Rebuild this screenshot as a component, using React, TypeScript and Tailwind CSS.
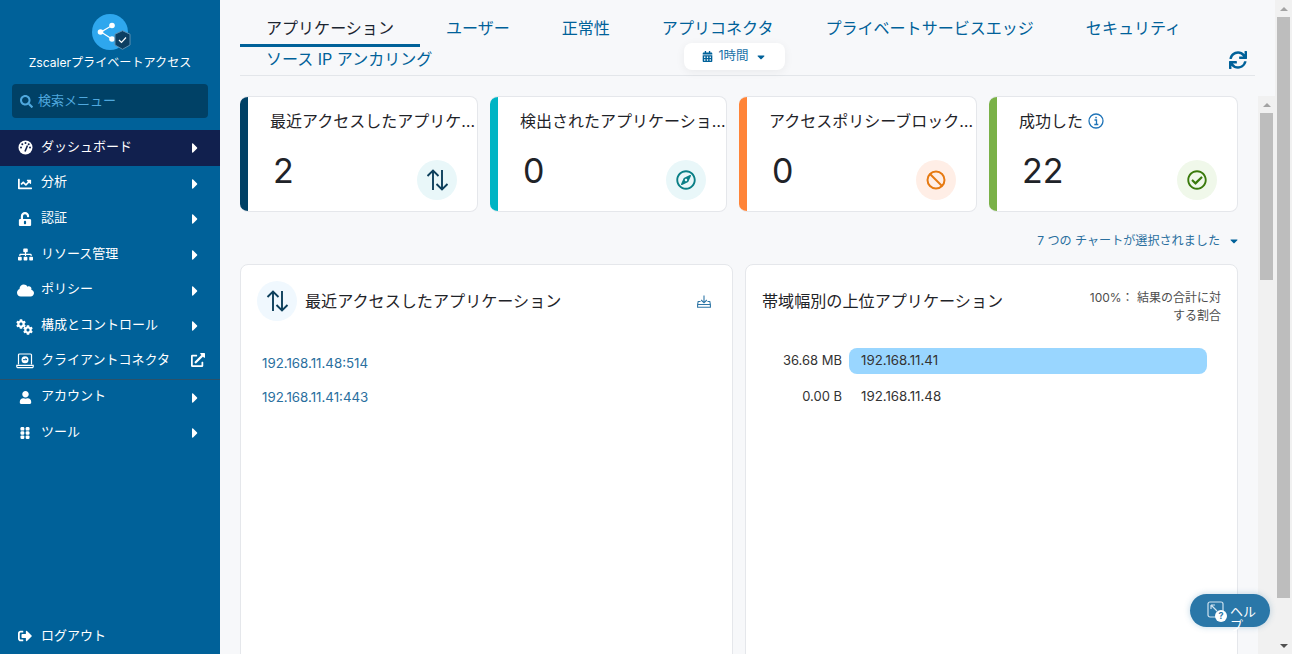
import React from "react";
import {
  FaChartLine, FaUnlockAlt, FaSitemap, FaCloud, FaCog, FaExternalLinkAlt, FaUser,
  FaSignOutAlt, FaCaretRight, FaCaretDown, FaSearch, FaCalendarAlt, FaSync, FaRegCompass, FaRegCheckCircle,
} from "react-icons/fa";

const font = "font-['Inter','Noto_Sans_CJK_JP',sans-serif]";

function Gauge() {
  return (
    <svg width="15" height="15" viewBox="0 0 15 15">
      <circle cx="7.500" cy="7.500" r="7" fill="#fff" />
      <g fill="#11204e">
        <circle cx="3" cy="7.500" r="1" />
        <circle cx="4.300" cy="4.300" r="1" />
        <circle cx="7.500" cy="3" r="1" />
        <circle cx="10.700" cy="4.300" r="1" />
        <circle cx="12" cy="7.500" r="1" />
      </g>
      <path d="M7 11.500L9.500 5.500" stroke="#11204e" strokeWidth="1.600" />
    </svg>
  );
}

function Gears() {
  return (
    <span className="relative block w-[18px] h-[15px]">
      <FaCog size={10} className="absolute left-0 top-0" />
      <FaCog size={10} className="absolute left-[7px] top-[6px]" />
    </span>
  );
}

function Laptop() {
  return (
    <svg width="18" height="16" viewBox="0 0 18 16" fill="none">
      <path d="M2.500 11.500V2a1 1 0 0 1 1-1h11a1 1 0 0 1 1 1v9.500" stroke="#fff" strokeWidth="1.200" />
      <path d="M.8 12.300h16.400v1.200a1.200 1.200 0 0 1-1.200 1.200H2a1.200 1.200 0 0 1-1.200-1.200z" stroke="#fff" strokeWidth="1.200" />
      <circle cx="9" cy="6.700" r="3.500" fill="#fff" />
      <path d="M7 6.700h4M9.500 5.500l1.500 1.200" stroke="#006199" strokeWidth="1" />
    </svg>
  );
}

function Dots() {
  return (
    <svg width="10" height="12" viewBox="0 0 10 12" fill="#fff">
      {[0, 4.200, 8.400].map((y) => (
        <g key={y}>
          <rect x="0.500" y={y} width="3.800" height="3.600" rx="1.200" />
          <rect x="5.700" y={y} width="3.800" height="3.600" rx="1.200" />
        </g>
      ))}
    </svg>
  );
}

function SwapArrows({ color }: { color: string }) {
  return (
    <svg width="24" height="24" viewBox="0 0 24 24" fill="none" stroke={color} strokeWidth="1.900">
      <path d="M8 22V2.500M2.500 8L8 2.500 13.500 8" />
      <path d="M17 2v19.500M11.500 16l5.500 5.500 5.500-5.500" />
    </svg>
  );
}

function Ban() {
  return (
    <svg width="20" height="20" viewBox="0 0 20 20" fill="none" stroke="#e67a12" strokeWidth="2">
      <circle cx="10" cy="10" r="8.500" />
      <path d="M4 4l12 12" />
    </svg>
  );
}

function Logo() {
  return (
    <div className="relative w-[36px] h-[36px]">
      <svg width="36" height="36" viewBox="0 0 36 36">
        <circle cx="18" cy="18" r="18" fill="#2ea7ee" />
        <path d="M9 18L20 11.500M9 18L20 25" stroke="#fff" strokeWidth="1.300" />
        <circle cx="8.500" cy="18" r="2.800" fill="#fff" />
        <circle cx="20" cy="11.500" r="2.800" fill="#fff" />
        <circle cx="20" cy="25" r="2.800" fill="#fff" />
      </svg>
      <svg className="absolute left-[22px] top-[16px]" width="17" height="20" viewBox="0 0 17 20">
        <path d="M8.500.7l7.500 3.500v10.800l-7.500 4.300-7.500-4.300V4.200z" fill="#0d3f62" stroke="#5d8fb0" strokeWidth="1" />
        <path d="M5 10l2.500 2.500L12 7.500" fill="none" stroke="#fff" strokeWidth="1.200" />
      </svg>
    </div>
  );
}

const nav = [
  { label: "ダッシュボード", icon: <Gauge />, active: true },
  { label: "分析", icon: <FaChartLine size={14} /> },
  { label: "認証", icon: <FaUnlockAlt size={14} /> },
  { label: "リソース管理", icon: <FaSitemap size={15} /> },
  { label: "ポリシー", icon: <FaCloud size={17} /> },
  { label: "構成とコントロール", icon: <Gears /> },
  { label: "クライアントコネクタ", icon: <Laptop />, external: true, divider: true },
  { label: "アカウント", icon: <FaUser size={13} /> },
  { label: "ツール", icon: <Dots /> },
];

function NavRow({ item }: { item: (typeof nav)[number] }) {
  return (
    <div
      className={`flex items-center h-[35.700px] pl-4 pr-[17px] text-white text-[13px] ${item.active ? "bg-[#11204e]" : ""} ${item.divider ? "border-b border-[#2b5169]" : ""}`}
    >
      <span className="w-[18px] flex justify-center">{item.icon}</span>
      <span className="ml-[7px] mb-[3px] flex-1 whitespace-nowrap">{item.label}</span>
      {item.external ? <FaExternalLinkAlt size={14} className="-mr-[2px] mb-[2px]" /> : <FaCaretRight size={16} />}
    </div>
  );
}

function Sidebar() {
  return (
    <aside className="w-[220px] shrink-0 bg-[#006199] flex flex-col h-full">
      <div className="flex flex-col items-center pt-[14px]">
        <Logo />
        <div className="text-white text-[12.100px] mt-[3px] leading-[20px] whitespace-nowrap">Zscalerプライベートアクセス</div>
      </div>
      <div className="mx-3 mt-[11px] h-[34px] rounded bg-[#004166] flex items-center pl-2 gap-[5px] text-[#4fa8de] text-[13px]">
        <FaSearch size={13} />
        <span>検索メニュー</span>
      </div>
      <nav className="mt-[12px]">
        {nav.map((item) => (
          <NavRow key={item.label} item={item} />
        ))}
      </nav>
      <div className="mt-auto h-[36px] flex items-center pl-4 text-white text-[13px]">
        <span className="w-[18px] flex justify-center"><FaSignOutAlt size={14} /></span>
        <span className="ml-[7px]">ログアウト</span>
      </div>
    </aside>
  );
}

const tabs = ["アプリケーション", "ユーザー", "正常性", "アプリコネクタ", "プライベートサービスエッジ", "セキュリティ", "ソース IP アンカリング"];

function Tabs() {
  return (
    <div className="relative h-[76px] ml-5 pt-4 border-b border-[#e3e6ea] flex flex-wrap content-start text-[16.040px]">
      {tabs.map((t, i) => (
        <div
          key={t}
          className={`px-[26px] leading-6 h-[31px] whitespace-nowrap border-b-[3px] ${i === 0 ? "border-[#006199] text-[#1b2530]" : "border-transparent text-[#006199]"}`}
        >
          {t}
        </div>
      ))}
      <div className="absolute left-[444px] top-[43px] w-[101px] h-[27px] bg-white rounded-lg shadow-[0_2px_10px_rgba(0,0,0,0.06)] flex items-center justify-center gap-[5px] text-[12.500px] text-[#1a72a8]">
        <FaCalendarAlt size={11} className="text-[#006199]" />
        <span>1時間</span>
        <FaCaretDown size={12} className="ml-[1px] text-[#006199]" />
      </div>
      <FaSync size={18} className="absolute right-[8px] top-[51px] text-[#006199]" />
    </div>
  );
}

type Kpi = { title: string; value: string; bar: string; circle: string; icon: React.ReactNode; info?: boolean };
const kpis: Kpi[] = [
  { title: "最近アクセスしたアプリケーション", value: "2", bar: "bg-[#004166]", circle: "bg-[#e9f7f9]", icon: <SwapArrows color="#0d3f5c" /> },
  { title: "検出されたアプリケーション数", value: "0", bar: "bg-[#00b4c4]", circle: "bg-[#e9f7f9]", icon: <FaRegCompass size={20} className="text-[#0a7f86]" /> },
  { title: "アクセスポリシーブロック済み", value: "0", bar: "bg-[#ff8438]", circle: "bg-[#ffeee6]", icon: <Ban /> },
  { title: "成功した", value: "22", bar: "bg-[#7ab148]", circle: "bg-[#f0f8ea]", icon: <FaRegCheckCircle size={20} className="text-[#3a7a0c]" />, info: true },
];

function KpiCard({ k }: { k: Kpi }) {
  return (
    <div className="relative h-[116px] bg-white rounded-lg border border-[#e5e7eb] border-l-0 flex overflow-hidden">
      <div className={`w-2 shrink-0 ${k.bar}`} />
      <div className="flex-1 min-w-0 pl-[22px] pt-[12px]">
        <div className="flex items-center gap-[5px] text-base leading-6 text-[#1f2328]">
          <span className="truncate">{k.title}</span>
          {k.info && (
            <svg width="16" height="16" viewBox="0 0 16 16" fill="none" className="shrink-0">
              <circle cx="8" cy="8" r="7" stroke="#1f74b8" strokeWidth="1.300" />
              <path d="M6.500 7h2v4.500M6.300 11.500h4" stroke="#1f74b8" strokeWidth="1.300" />
              <rect x="7.300" y="3.800" width="1.500" height="1.500" fill="#1f74b8" />
            </svg>
          )}
        </div>
        <div className="text-[34px] leading-[40px] mt-[18px] pl-[3px] text-[#1f2328]">{k.value}</div>
      </div>
      <div className={`absolute right-[20px] top-[63px] w-10 h-10 rounded-full flex items-center justify-center ${k.circle}`}>{k.icon}</div>
    </div>
  );
}

function RecentCard() {
  return (
    <div className="bg-white rounded-lg border border-[#e5e7eb] h-[420px] px-4 pt-4">
      <div className="flex items-center">
        <div className="w-10 h-10 rounded-full bg-[#f0f8fe] flex items-center justify-center">
          <SwapArrows color="#0d3f5c" />
        </div>
        <div className="ml-[8px] text-[16.100px] text-[#1f2328] flex-1">最近アクセスしたアプリケーション</div>
        <svg width="14" height="13" viewBox="0 0 14 13" fill="none" stroke="#2e76a6" strokeWidth="1.100" className="mr-[5px]">
          <path d="M7 .5v7M4.200 5 7 7.800 9.800 5" />
          <path d="M3.500 6.500H1.200L.6 9.500v2.800h12.800V9.500l-.6-3h-2.300M.6 9.500h12.800" />
        </svg>
      </div>
      <div className="mt-[25px] ml-[5px] text-[13.300px] text-[#2a6f9e] leading-[34px]">
        <div>192.168.11.48:514</div>
        <div>192.168.11.41:443</div>
      </div>
    </div>
  );
}

function BandwidthCard() {
  return (
    <div className="bg-white rounded-lg border border-[#e5e7eb] h-[420px] px-4 pt-[23px]">
      <div className="flex items-start justify-between">
        <div className="text-[16.100px] leading-6 text-[#1f2328] mt-[1px]">帯域幅別の上位アプリケーション</div>
        <div className="w-[135px] mt-[1px] text-right text-xs leading-[18px] text-[#4d4d4d]">100%： 結果の合計に対する割合</div>
      </div>
      <div className="mt-[23px] text-[13px] text-[#333]">
        <div className="flex items-center h-[26px]">
          <div className="w-[80px] mr-[7px] text-right whitespace-nowrap">36.68 MB</div>
          <div className="w-[358px] h-[26px] rounded-lg bg-[#99d6ff] pl-3 flex items-center text-[13.300px]">192.168.11.41</div>
        </div>
        <div className="flex items-center h-[26px] mt-[10px]">
          <div className="w-[80px] mr-[7px] text-right whitespace-nowrap">0.00 B</div>
          <div className="pl-3 text-[13.300px]">192.168.11.48</div>
        </div>
      </div>
    </div>
  );
}

function Scrollbar({ thumbHeight, bottomArrow }: { thumbHeight: string; bottomArrow?: boolean }) {
  return (
    <div className="w-[17px] shrink-0 bg-[#f1f1f1] h-full flex flex-col items-center overflow-hidden">
      <div className="h-[17px] shrink-0 flex items-center justify-center">
        <div className="w-0 h-0 border-x-[4px] border-x-transparent border-b-[4px] border-b-[#a3a3a3]" />
      </div>
      <div className={`w-[13px] bg-[#bdbdbd] shrink-0 ${thumbHeight}`} />
      {bottomArrow && (
        <div className="mt-auto h-[17px] shrink-0 flex items-center justify-center">
          <div className="w-0 h-0 border-x-[4px] border-x-transparent border-t-[4px] border-t-[#505050]" />
        </div>
      )}
    </div>
  );
}

export default function App() {
  return (
    <div className={`h-[654px] w-[1292px] flex overflow-hidden bg-[#f7f8fa] relative ${font}`}>
      <Sidebar />
      <main className="flex-1 min-w-0 flex flex-col">
        <div className="mr-[20px]"><Tabs /></div>
        <div className="flex flex-1 min-h-0 mt-[20px]">
          <div className="flex-1 min-w-0 pl-5 pr-5">
            <div className="grid grid-cols-[238px_237px_238px_249px] gap-x-3">
              {kpis.map((k) => (
                <KpiCard key={k.title} k={k} />
              ))}
            </div>
            <div className="flex justify-end items-center h-[52px] pt-[6px] text-[12.100px] text-[#2a6f9e]">
              <span>7 つの チャートが選択されました</span>
              <FaCaretDown size={12} className="ml-[8px] -mr-[2px] text-[#006199]" />
            </div>
            <div className="grid grid-cols-2 gap-x-3">
              <RecentCard />
              <BandwidthCard />
            </div>
          </div>
          <Scrollbar thumbHeight="h-[167px]" />
        </div>
      </main>
      <Scrollbar thumbHeight="h-[581px]" bottomArrow />
      <div className="absolute left-[1190px] top-[594px] w-[80px] h-[33px] rounded-full bg-[#2a77a8] text-white flex items-center pl-[17px] shadow-[0_0_6px_rgba(42,119,168,0.3)]">
        <div className="relative w-[20px] h-[20px] shrink-0">
          <svg width="18" height="18" viewBox="0 0 18 18" fill="none" stroke="#cfe3f0" strokeWidth="1.200">
            <rect x="1" y="1" width="15" height="15" rx="2" />
            <path d="M4 4l6 6M4 4h4M4 4v4" />
          </svg>
          <div className="absolute left-[8px] top-[9px] w-[12px] h-[12px] rounded-full bg-white text-[#2a77a8] text-[9px] leading-[12px] font-bold text-center">?</div>
        </div>
        <div className="w-[27px] ml-[3px] mt-[14px] text-[13px] leading-[14px]">ヘルプ</div>
      </div>
    </div>
  );
}
